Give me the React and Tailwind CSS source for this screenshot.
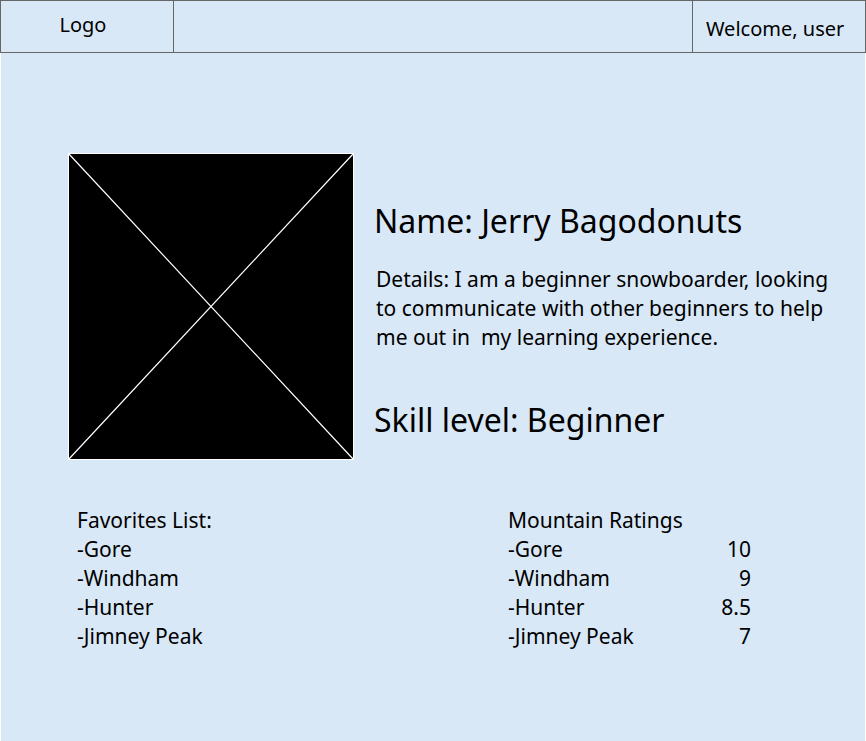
const favorites = ["Gore", "Windham", "Hunter", "Jimney Peak"];
const ratings = [
  ["Gore", "10"],
  ["Windham", "9"],
  ["Hunter", "8.5"],
  ["Jimney Peak", "7"],
];

export default function App() {
  return (
    <div className="min-h-screen bg-white px-px font-['Noto_Sans','Open_Sans',sans-serif] text-black">
      <div className="min-h-screen bg-[#d9e8f7]">
        <header className="-mx-px flex h-[53px] border border-[#666] text-[20px]">
          <a href="#home" className="flex w-1/5 items-center justify-center border-r border-[#666] pr-2 pb-1">Logo</a>
          <div className="flex-1" />
          <div className="flex w-1/5 items-center justify-center border-l border-[#666] pt-1 pr-2 whitespace-nowrap">
            Welcome, user
          </div>
        </header>
        <main className="pt-[100px] pr-6 pl-[67px]">
          <section className="flex gap-5">
            <svg className="h-[307px] w-[286px] shrink-0" viewBox="0 0 286 307" role="img" aria-label="Profile picture">
              <rect x="0.5" y="0.5" width="285" height="306" fill="#000" stroke="#fff" />
              <path d="M0.5 0.5 285.5 306.5M285.5 0.5 0.5 306.5" stroke="#fff" strokeWidth="1.2" />
            </svg>
            <div className="min-w-0 flex-1 pt-[44px]">
              <h1 className="text-[32px] leading-[48px] whitespace-nowrap">Name: Jerry Bagodonuts</h1>
              <p className="mt-[20px] pl-[2px] text-[21px] leading-[29px] whitespace-nowrap">
                Details: I am a beginner snowboarder, looking<br />
                to communicate with other beginners to help<br />
                me out in&nbsp; my learning experience.
              </p>
              <h2 className="mt-[44px] text-[32px] leading-[48px] whitespace-nowrap">Skill level: Beginner</h2>
            </div>
          </section>
          <div className="mt-[46px] flex pl-[9px] text-[21px] leading-[29px]">
            <section className="w-[431px]">
              <h2>Favorites List:</h2>
              <ul>
                {favorites.map((name) => <li key={name}>-{name}</li>)}
              </ul>
            </section>
            <table className="w-[243px]">
              <caption className="text-left">Mountain Ratings</caption>
              <tbody>
                {ratings.map(([name, score]) => (
                  <tr key={name}>
                    <td>-{name}</td>
                    <td className="text-right">{score}</td>
                  </tr>
                ))}
              </tbody>
            </table>
          </div>
        </main>
      </div>
    </div>
  );
}
